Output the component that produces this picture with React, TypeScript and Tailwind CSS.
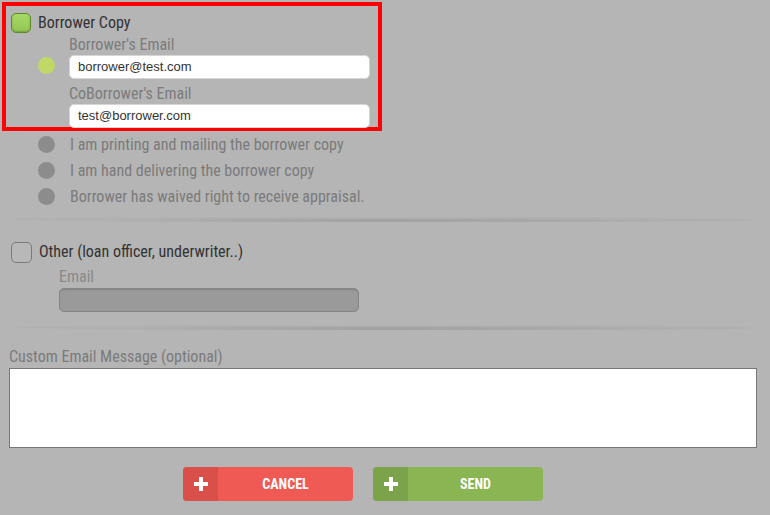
import React from 'react';

function Divider() {
  return (
    <div className="mx-[10px] mr-[14px] h-[3px] rounded-[50%] bg-gradient-to-r from-[#b5b5b5] via-[#a2a2a2] to-[#b0b0b0] shadow-[0_-1px_2px_rgba(0,0,0,0.06)]" />
  );
}

function Dot({ on }: { on?: boolean }) {
  return (
    <span
      className={
        'w-[17px] h-[17px] rounded-full shrink-0 ' +
        (on ? 'bg-[#c0d867]' : 'bg-[#8c8c8c]')
      }
    />
  );
}

function PlusButton({ label, tone }: { label: string; tone: 'red' | 'green' }) {
  const red = tone === 'red';
  return (
    <button
      className={
        'flex w-[170px] h-[34px] rounded-[4px] overflow-hidden text-white ' +
        (red ? 'bg-[#f05a54]' : 'bg-[#89b553]')
      }
    >
      <span
        className={
          'w-[35px] h-full flex items-center justify-center ' +
          (red ? 'bg-[#d9504b]' : 'bg-[#7aa34b]')
        }
      >
        <svg width="14" height="14" viewBox="0 0 14 14">
          <rect x="5" y="0" width="4" height="14" fill="#fff" />
          <rect x="0" y="5" width="14" height="4" fill="#fff" />
        </svg>
      </span>
      <span className="flex-1 h-full flex items-center justify-center text-[14px] font-bold">
        {label}
      </span>
    </button>
  );
}

export default function App() {
  return (
    <main
      className="w-[770px] h-[515px] bg-[#b5b5b5] overflow-hidden text-[16px]"
      style={{ fontFamily: '"Roboto Condensed", "DejaVu Sans Condensed", Roboto, sans-serif' }}
    >
      <div className="pt-[2px] pl-[2px]">
        {/* Borrower copy block (highlighted) */}
        <div className="w-[380px] h-[129px] border-[4px] border-[#ff0000] pt-[6px] pl-[5px]">
          <label className="flex items-center gap-[7px] h-[22px]">
            <span className="w-[20px] h-[20px] rounded-[5px] bg-gradient-to-b from-[#a6d866] to-[#94c655] border border-[#5d8a2c] shadow-[inset_0_-1px_2px_rgba(0,0,0,0.2)]" />
            <span className="text-[#333]">Borrower Copy</span>
          </label>
          <div className="flex mt-[2px]">
            <div className="w-[58px] flex justify-end pr-[14px] pt-[21px]">
              <Dot on />
            </div>
            <div className="w-[301px]">
              <div className="text-[#7c7c7c] leading-[18px]">Borrower's Email</div>
              <div className="h-[24px] mt-[1px] bg-white rounded-[5px] border border-[#d6d6d6] flex items-center px-[8px] text-[13px] text-[#333] font-['Liberation_Sans',Arial,sans-serif]">
                borrower@test.com
              </div>
              <div className="text-[#7c7c7c] leading-[18px] mt-[6px]">CoBorrower's Email</div>
              <div className="h-[24px] mt-[1px] bg-white rounded-[5px] border border-[#d6d6d6] flex items-center px-[8px] text-[13px] text-[#333] font-['Liberation_Sans',Arial,sans-serif]">
                test@borrower.com
              </div>
            </div>
          </div>
        </div>
      </div>

      {/* Delivery options */}
      <div className="pl-[38px] pt-[5px] flex flex-col gap-[9px] text-[#7b7b7b]">
        <div className="flex items-center gap-[15px] h-[17px]">
          <Dot />
          <span>I am printing and mailing the borrower copy</span>
        </div>
        <div className="flex items-center gap-[15px] h-[17px]">
          <Dot />
          <span>I am hand delivering the borrower copy</span>
        </div>
        <div className="flex items-center gap-[15px] h-[17px]">
          <Dot />
          <span>Borrower has waived right to receive appraisal.</span>
        </div>
      </div>

      <div className="pt-[14px]">
        <Divider />
      </div>

      {/* Other recipient */}
      <div className="pl-[11px] pt-[19px]">
        <label className="flex items-center gap-[7px] h-[22px]">
          <span className="w-[21px] h-[21px] rounded-[5px] bg-[#b8b8b8] border border-[#7a7a7a]" />
          <span className="text-[#333]">Other (loan officer, underwriter..)</span>
        </label>
        <div className="pl-[48px] pt-[5px]">
          <div className="text-[#8a8a8a] leading-[18px]">Email</div>
          <div className="w-[300px] h-[24px] mt-[2px] rounded-[5px] bg-[#9a9a9a] border border-[#858585] shadow-[inset_0_1px_1px_rgba(0,0,0,0.15)]" />
        </div>
      </div>

      <div className="pt-[15px]">
        <Divider />
      </div>

      {/* Custom message */}
      <div className="px-[9px] pt-[18px]">
        <div className="text-[#7b7b7b] leading-[18px]">Custom Email Message (optional)</div>
        <textarea className="block w-[748px] h-[80px] mt-[2px] bg-white border border-[#777] resize-none outline-none" />
      </div>

      {/* Actions */}
      <div className="flex justify-center gap-[20px] pt-[19px] pr-[44px]">
        <PlusButton label="CANCEL" tone="red" />
        <PlusButton label="SEND" tone="green" />
      </div>
    </main>
  );
}
